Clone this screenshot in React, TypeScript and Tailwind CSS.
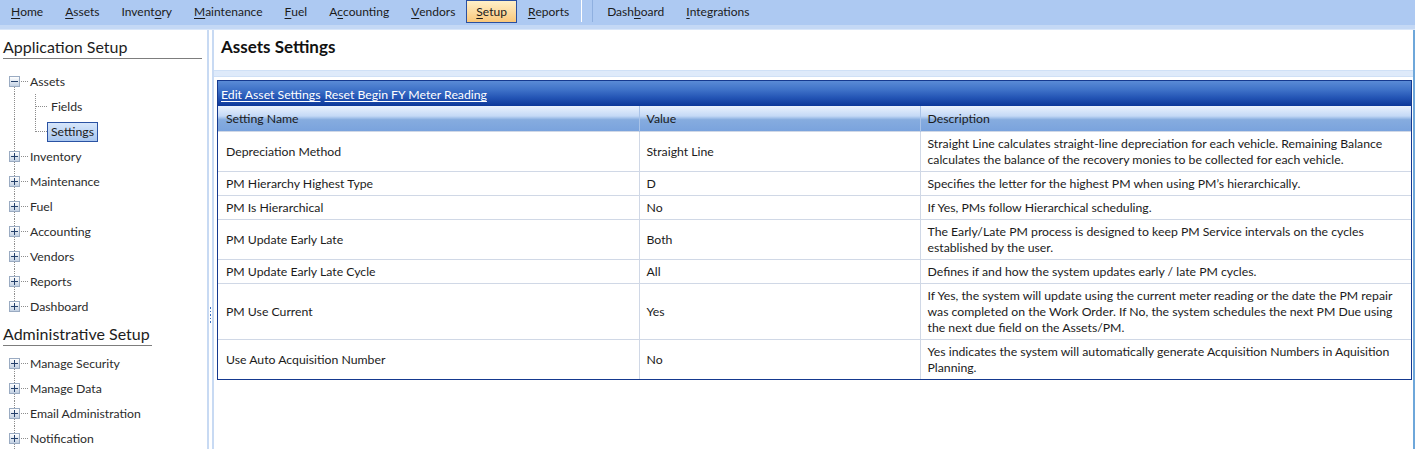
import React from 'react';

const font = { fontFamily: 'Lato, "Noto Sans", sans-serif' };

type MenuItem = { label: string; key: number; active?: boolean };

const menuLeft: MenuItem[] = [
    { label: 'Home', key: 0 },
    { label: 'Assets', key: 0 },
    { label: 'Inventory', key: 6 },
    { label: 'Maintenance', key: 0 },
    { label: 'Fuel', key: 0 },
    { label: 'Accounting', key: 1 },
    { label: 'Vendors', key: 0 },
    { label: 'Setup', key: 0, active: true },
    { label: 'Reports', key: 0 },
];

const menuRight: MenuItem[] = [
    { label: 'Dashboard', key: 4 },
    { label: 'Integrations', key: 0 },
];

const Mnemonic: React.FC<{ item: MenuItem }> = ({ item }) => (
    <>
        {item.label.slice(0, item.key)}
        <span className="underline underline-offset-2">{item.label[item.key]}</span>
        {item.label.slice(item.key + 1)}
    </>
);

const MenuButton: React.FC<{ item: MenuItem }> = ({ item }) => (
    <div
        className={
            item.active
                ? 'flex h-[23px] items-center border border-[#2b4f9f] bg-gradient-to-b from-[#fff0c8] to-[#f9c77a] px-[9px] text-[#1b1b1b]'
                : 'flex h-[23px] items-center border border-transparent px-[10px] text-[#1b1b1b]'
        }
    >
        <Mnemonic item={item} />
    </div>
);

const Toggle: React.FC<{ open?: boolean }> = ({ open }) => (
    <span className="relative z-10 flex h-[11px] w-[11px] shrink-0 items-center justify-center border border-[#9aabc2] bg-gradient-to-b from-white to-[#c3d1e3]">
        <svg width="7" height="7" viewBox="0 0 7 7">
            <path d="M0 3.5H7" stroke="#24406b" strokeWidth="1" />
            {!open && <path d="M3.5 0V7" stroke="#24406b" strokeWidth="1" />}
        </svg>
    </span>
);

type Pos = 'first' | 'mid' | 'last';

const VLine: React.FC<{ pos: Pos; left: string }> = ({ pos, left }) => {
    const span = pos === 'first' ? 'top-1/2 bottom-0' : pos === 'last' ? 'top-0 bottom-1/2' : 'top-0 bottom-0';
    return <span className={`absolute ${left} ${span} border-l border-dotted border-[#8d8d8d]`} />;
};

const TreeRow: React.FC<{ label: string; pos: Pos; open?: boolean }> = ({ label, pos, open }) => (
    <div className="relative flex h-[25px] items-center pl-[9px]">
        <VLine pos={pos} left="left-[14px]" />
        <Toggle open={open} />
        <span className="ml-[1px] w-[7px] border-t border-dotted border-[#8d8d8d]" />
        <span className="ml-[2px] whitespace-nowrap text-[#2b2b2b]">{label}</span>
    </div>
);

const ChildRow: React.FC<{ label: string; last?: boolean; selected?: boolean }> = ({ label, last, selected }) => (
    <div className="relative flex h-[25px] items-center pl-[35px]">
        <VLine pos="mid" left="left-[14px]" />
        <VLine pos={last ? 'last' : 'mid'} left="left-[35px]" />
        <span className="w-[12px] border-t border-dotted border-[#8d8d8d]" />
        {selected ? (
            <span className="flex h-[20px] items-center border border-[#2a52a3] bg-gradient-to-b from-[#d6e6fb] to-[#a9c7ef] px-[3px] text-[#1b1b1b]">
                {label}
            </span>
        ) : (
            <span className="ml-[4px] text-[#2b2b2b]">{label}</span>
        )}
    </div>
);

const SectionTitle: React.FC<{ children: React.ReactNode; width: string }> = ({ children, width }) => (
    <div className={`${width} ml-[3px] whitespace-nowrap border-b border-[#7d7d7d] text-[16px] leading-[22px] text-[#1d1d1d]`}>{children}</div>
);

const settings = [
    {
        name: 'Depreciation Method',
        value: 'Straight Line',
        desc: 'Straight Line calculates straight-line depreciation for each vehicle. Remaining Balance calculates the balance of the recovery monies to be collected for each vehicle.',
    },
    { name: 'PM Hierarchy Highest Type', value: 'D', desc: 'Specifies the letter for the highest PM when using PM\u2019s hierarchically.' },
    { name: 'PM Is Hierarchical', value: 'No', desc: 'If Yes, PMs follow Hierarchical scheduling.' },
    {
        name: 'PM Update Early Late',
        value: 'Both',
        desc: 'The Early/Late PM process is designed to keep PM Service intervals on the cycles established by the user.',
    },
    { name: 'PM Update Early Late Cycle', value: 'All', desc: 'Defines if and how the system updates early / late PM cycles.' },
    {
        name: 'PM Use Current',
        value: 'Yes',
        desc: 'If Yes, the system will update using the current meter reading or the date the PM repair was completed on the Work Order. If No, the system schedules the next PM Due using the next due field on the Assets/PM.',
    },
    {
        name: 'Use Auto Acquisition Number',
        value: 'No',
        desc: 'Yes indicates the system will automatically generate Acquisition Numbers in Aquisition Planning.',
    },
];

export default function App() {
    return (
        <div className="flex h-[449px] w-[1415px] flex-col overflow-hidden bg-white text-[12.25px] leading-[16px]" style={font}>
            {/* menu bar */}
            <div className="flex h-[25px] shrink-0 items-start bg-[#adc9f2] text-[12px]">
                {menuLeft.map((m) => (
                    <MenuButton key={m.label} item={m} />
                ))}
                <div className="ml-[1px] mr-[3px] flex h-[22px] items-stretch">
                    <span className="w-[1px] bg-white" />
                    <span className="ml-[10px] w-[1px] bg-[#8fb0e0]" />
                </div>
                {menuRight.map((m) => (
                    <MenuButton key={m.label} item={m} />
                ))}
            </div>
            <div className="h-[5px] shrink-0 border-b border-[#d9e6f9] bg-[#c4d8f5]" />

            <div className="flex min-h-0 flex-1">
                {/* left navigation */}
                <div className="w-[207px] shrink-0 pt-[6px]">
                    <SectionTitle width="w-[199px]">Application Setup</SectionTitle>
                    <div className="mt-[10px]">
                        <TreeRow label="Assets" pos="first" open />
                        <ChildRow label="Fields" />
                        <ChildRow label="Settings" last selected />
                        <TreeRow label="Inventory" pos="mid" />
                        <TreeRow label="Maintenance" pos="mid" />
                        <TreeRow label="Fuel" pos="mid" />
                        <TreeRow label="Accounting" pos="mid" />
                        <TreeRow label="Vendors" pos="mid" />
                        <TreeRow label="Reports" pos="mid" />
                        <TreeRow label="Dashboard" pos="last" />
                    </div>
                    <div className="pt-[4px]">
                        <SectionTitle width="w-[149px]">Administrative Setup</SectionTitle>
                    </div>
                    <div className="mt-[5px]">
                        <TreeRow label="Manage Security" pos="first" />
                        <TreeRow label="Manage Data" pos="mid" />
                        <TreeRow label="Email Administration" pos="mid" />
                        <TreeRow label="Notification" pos="mid" />
                    </div>
                </div>

                {/* splitter */}
                <div className="flex w-[7px] shrink-0 flex-col items-center border-x-2 border-[#c8daf3] bg-white pt-[277px]">
                    <div className="flex flex-col gap-[2px]">
                        {[0, 1, 2, 3, 4].map((i) => (
                            <span key={i} className="h-[1.5px] w-[1.5px] bg-[#3b6fc0]" />
                        ))}
                    </div>
                </div>

                {/* content */}
                <div className="flex min-w-0 flex-1 flex-col border-r-2 border-[#6ea7da]">
                    <div className="h-[40px] shrink-0 pl-[7px] pt-[6px] text-[17px] font-bold leading-[22px] text-[#111]">Assets Settings</div>
                    <div className="h-[7px] shrink-0 border-y border-[#cfe0f6] bg-[#deeafa]" />
                    <div className="mr-[1px] ml-[3px] mt-[3px] border border-[#15398f]">
                        <div className="flex h-[25px] items-end gap-[4px] bg-[linear-gradient(to_bottom,#5a8bd6_0%,#3f72c8_35%,#2556b6_65%,#0c3799_100%)] px-[3px] pb-[3px] text-white">
                            <span className="underline underline-offset-2">Edit Asset Settings</span>
                            <span className="underline underline-offset-2">Reset Begin FY Meter Reading</span>
                        </div>
                        <table className="w-full table-fixed border-collapse text-[#1b1b1b]">
                            <colgroup>
                                <col className="w-[421px]" />
                                <col className="w-[281px]" />
                                <col />
                            </colgroup>
                            <thead>
                                <tr className="h-[25px] bg-[linear-gradient(to_bottom,#eaf2fd_0%,#c4d9f6_40%,#86acdf_55%,#7aa3dd_100%)] text-left">
                                    <th className="border-r border-[#a9c3e8] pl-[8px] pt-[2px] font-normal">Setting Name</th>
                                    <th className="border-r border-[#a9c3e8] pl-[7px] pt-[2px] font-normal">Value</th>
                                    <th className="pl-[7px] pt-[2px] font-normal">Description</th>
                                </tr>
                            </thead>
                            <tbody>
                                {settings.map((s) => (
                                    <tr key={s.name} className="border-t border-[#d0d8e6] align-middle">
                                        <td className="border-r border-[#d0d8e6] pb-[3px] pl-[8px] pt-[4px]">{s.name}</td>
                                        <td className="border-r border-[#d0d8e6] pb-[3px] pl-[7px] pt-[4px]">{s.value}</td>
                                        <td className="pb-[3px] pl-[7px] pr-[6px] pt-[4px]">{s.desc}</td>
                                    </tr>
                                ))}
                            </tbody>
                        </table>
                    </div>
                </div>
            </div>
        </div>
    );
}
